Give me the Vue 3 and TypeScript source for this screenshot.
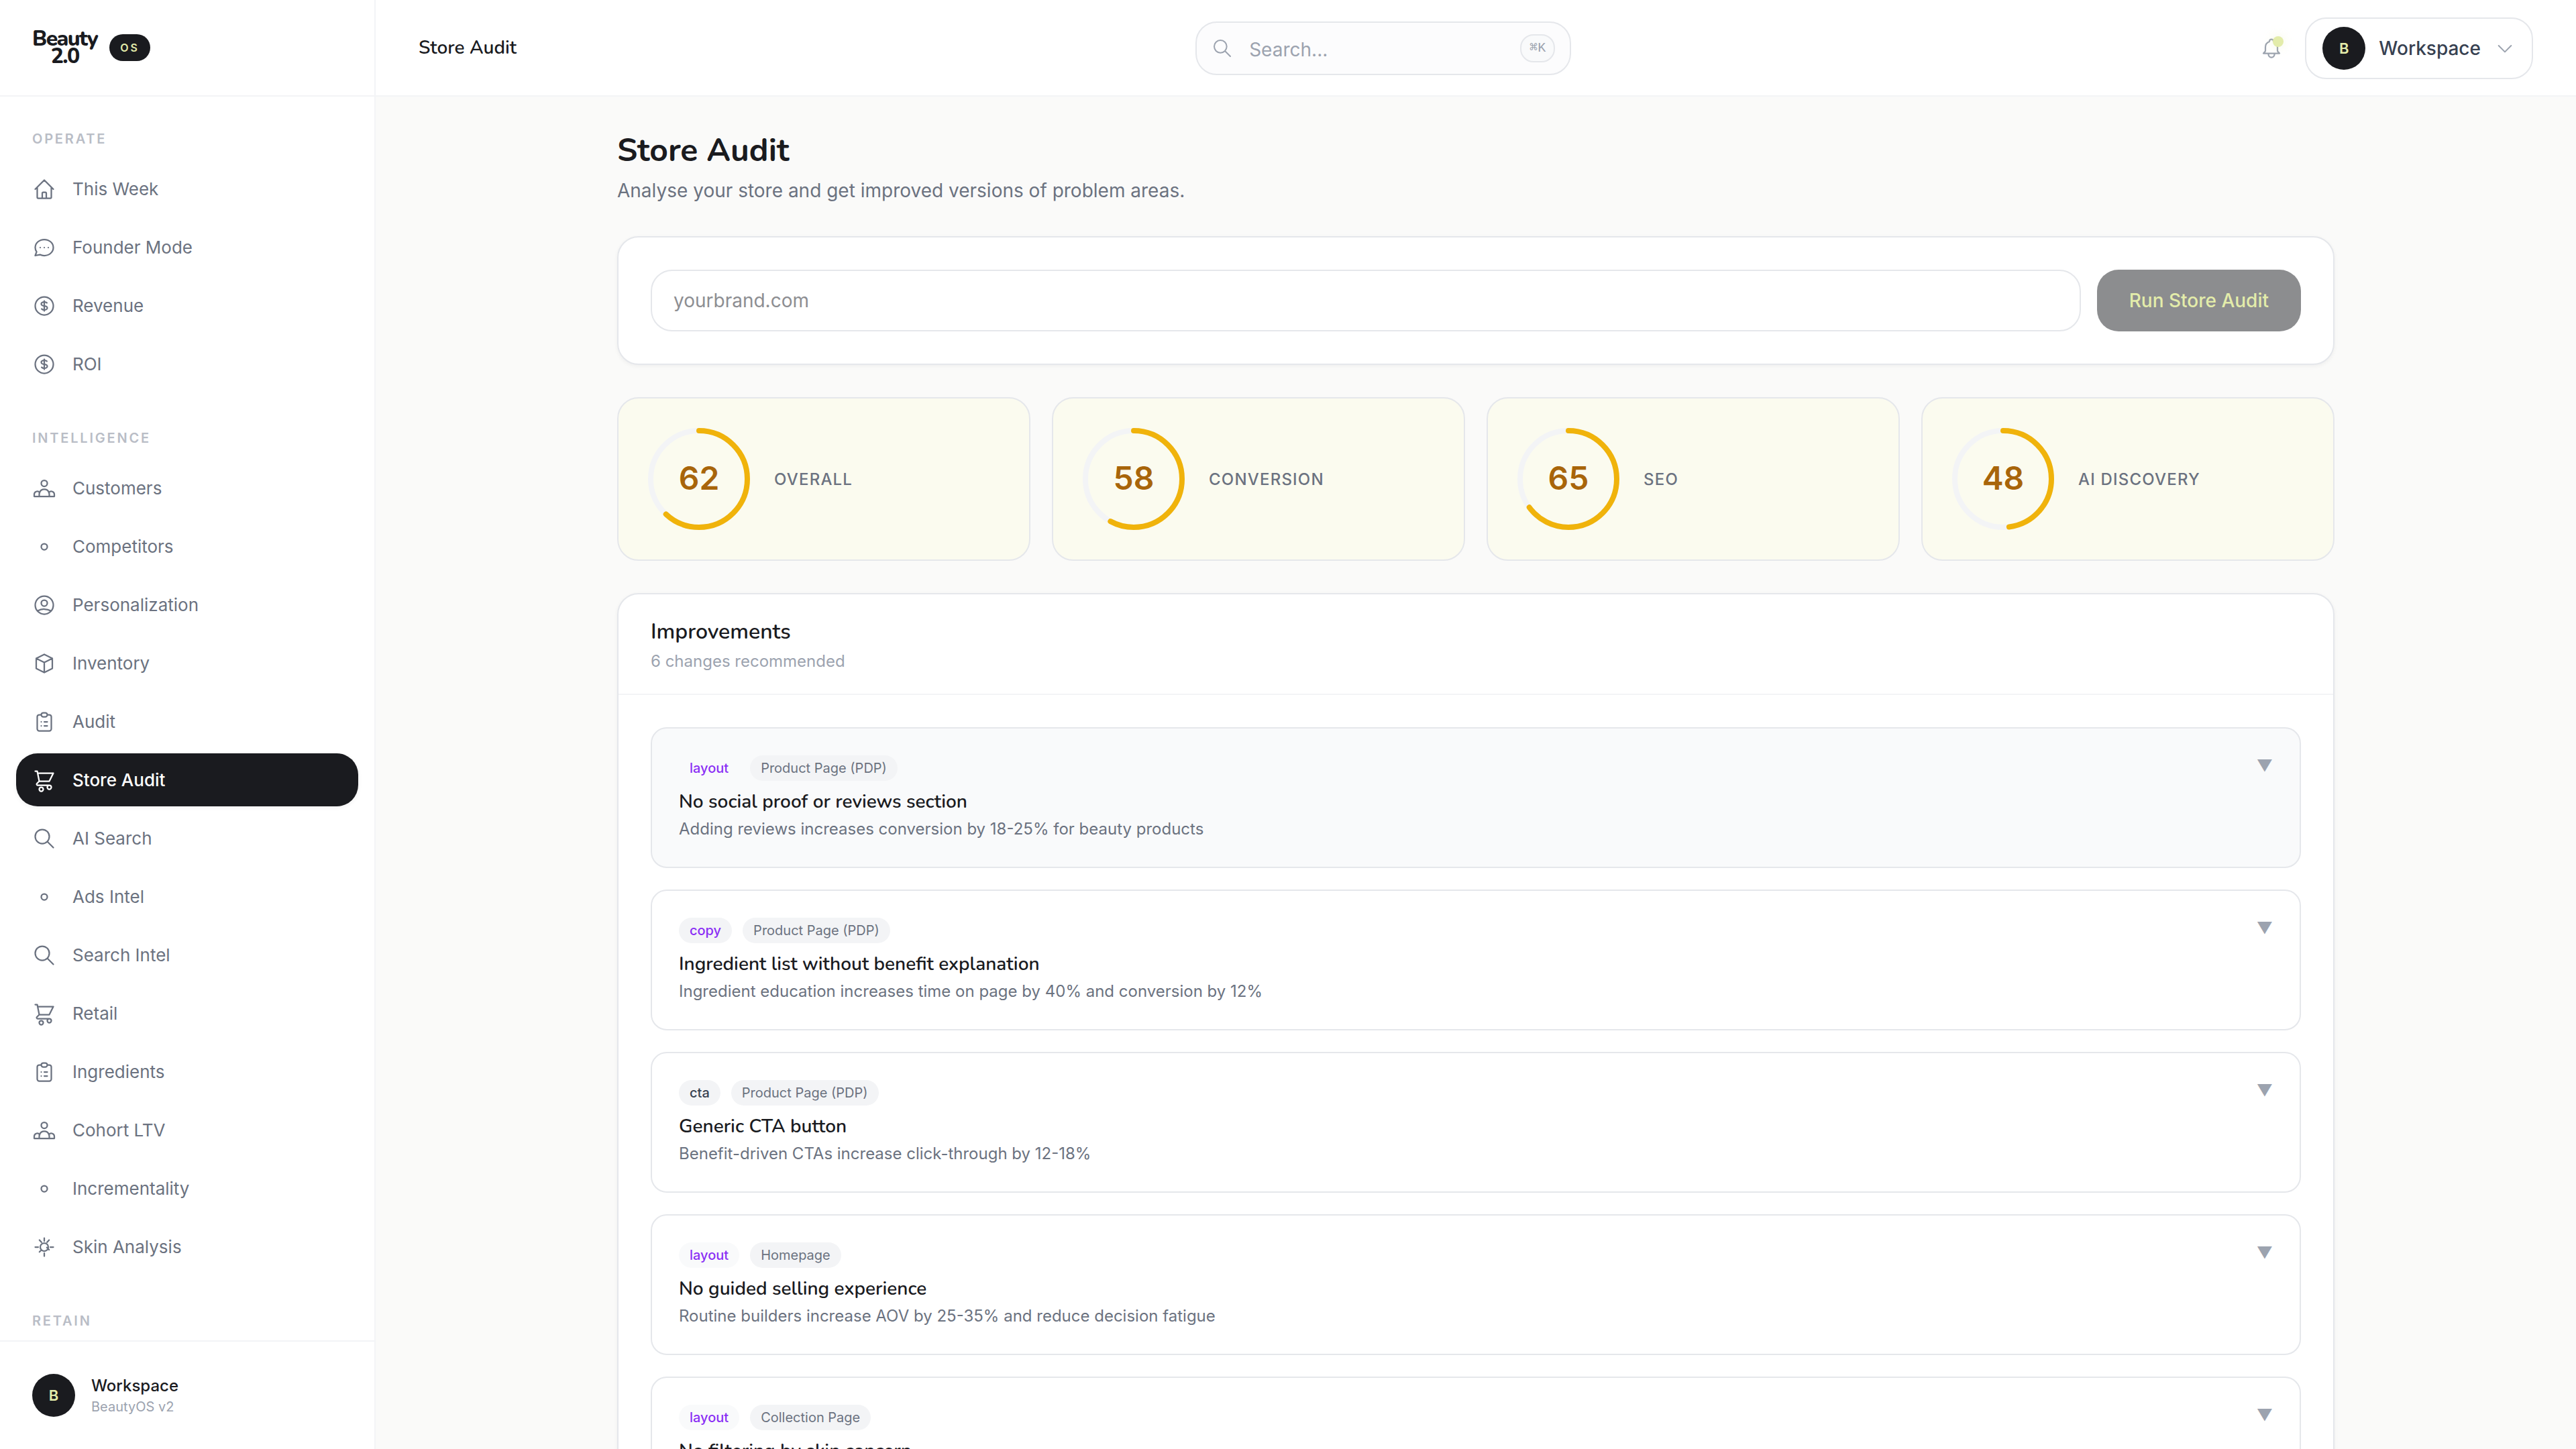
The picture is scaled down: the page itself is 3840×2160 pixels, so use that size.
<script setup lang="ts">
import { ref } from 'vue'

type IconName =
  | 'home' | 'chat' | 'dollar' | 'users' | 'dot' | 'user' | 'box'
  | 'clipboard' | 'cart' | 'search' | 'sun'

interface NavItem { label: string; icon: IconName; active?: boolean }
interface NavSection { title: string; items: NavItem[] }
interface Score { label: string; value: number }
interface Improvement { kind: string; page: string; title: string; impact: string }

const icons: Record<IconName, string> = {
  home: 'M3 12l2-2m0 0l7-7 7 7M5 10v10a1 1 0 001 1h3m10-11l2 2m-2-2v10a1 1 0 01-1 1h-3m-6 0a1 1 0 001-1v-4a1 1 0 011-1h2a1 1 0 011 1v4a1 1 0 001 1m-6 0h6',
  chat: 'M8 12h.01M12 12h.01M16 12h.01M21 12c0 4.418-4.03 8-9 8a9.863 9.863 0 01-4.255-.949L3 20l1.395-3.72C3.512 15.042 3 13.574 3 12c0-4.418 4.03-8 9-8s9 3.582 9 8z',
  dollar: 'M12 8c-1.657 0-3 .895-3 2s1.343 2 3 2 3 .895 3 2-1.343 2-3 2m0-8c1.11 0 2.08.402 2.599 1M12 8V7m0 1v8m0 0v1m0-1c-1.11 0-2.08-.402-2.599-1M21 12a9 9 0 11-18 0 9 9 0 0118 0z',
  users: 'M17 20h5v-2a3 3 0 00-5.356-1.857M17 20H7m10 0v-2c0-.656-.126-1.283-.356-1.857M7 20H2v-2a3 3 0 015.356-1.857M7 20v-2c0-.656.126-1.283.356-1.857m0 0a5.002 5.002 0 019.288 0M15 7a3 3 0 11-6 0 3 3 0 016 0z',
  dot: 'M15 12a3 3 0 11-6 0 3 3 0 016 0z',
  user: 'M5.121 17.804A13.937 13.937 0 0112 16c2.5 0 4.847.655 6.879 1.804M15 10a3 3 0 11-6 0 3 3 0 016 0zm6 2a9 9 0 11-18 0 9 9 0 0118 0z',
  box: 'M20 7l-8-4-8 4m16 0l-8 4m8-4v10l-8 4m0-10L4 7m8 4v10M4 7v10l8 4',
  clipboard: 'M9 5H7a2 2 0 00-2 2v12a2 2 0 002 2h10a2 2 0 002-2V7a2 2 0 00-2-2h-2M9 5a2 2 0 002 2h2a2 2 0 002-2M9 5a2 2 0 012-2h2a2 2 0 012 2m-3 7h3m-3 4h3m-6-4h.01M9 16h.01',
  cart: 'M3 3h2l.4 2M7 13h10l4-8H5.4M7 13L5.4 5M7 13l-2.293 2.293c-.63.63-.184 1.707.707 1.707H17m0 0a2 2 0 100 4 2 2 0 000-4zM11 21a2 2 0 11-4 0 2 2 0 014 0z',
  search: 'M21 21l-6-6m2-5a7 7 0 11-14 0 7 7 0 0114 0z',
  sun: 'M12 3v3m0 12v3M3 12h3m12 0h3M7.2 5l2 2.2M16.8 5l-2 2.2M7.2 16.8l1.8-1.8M14.6 12.4l2.2 2.3M16 12a4 4 0 11-8 0 4 4 0 018 0z',
}

const sections: NavSection[] = [
  {
    title: 'OPERATE',
    items: [
      { label: 'This Week', icon: 'home' },
      { label: 'Founder Mode', icon: 'chat' },
      { label: 'Revenue', icon: 'dollar' },
      { label: 'ROI', icon: 'dollar' },
    ],
  },
  {
    title: 'INTELLIGENCE',
    items: [
      { label: 'Customers', icon: 'users' },
      { label: 'Competitors', icon: 'dot' },
      { label: 'Personalization', icon: 'user' },
      { label: 'Inventory', icon: 'box' },
      { label: 'Audit', icon: 'clipboard' },
      { label: 'Store Audit', icon: 'cart', active: true },
      { label: 'AI Search', icon: 'search' },
      { label: 'Ads Intel', icon: 'dot' },
      { label: 'Search Intel', icon: 'search' },
      { label: 'Retail', icon: 'cart' },
      { label: 'Ingredients', icon: 'clipboard' },
      { label: 'Cohort LTV', icon: 'users' },
      { label: 'Incrementality', icon: 'dot' },
      { label: 'Skin Analysis', icon: 'sun' },
    ],
  },
  { title: 'RETAIN', items: [] },
]

const scores: Score[] = [
  { label: 'OVERALL', value: 62 },
  { label: 'CONVERSION', value: 58 },
  { label: 'SEO', value: 65 },
  { label: 'AI DISCOVERY', value: 48 },
]

const improvements: Improvement[] = [
  { kind: 'layout', page: 'Product Page (PDP)', title: 'No social proof or reviews section', impact: 'Adding reviews increases conversion by 18-25% for beauty products' },
  { kind: 'copy', page: 'Product Page (PDP)', title: 'Ingredient list without benefit explanation', impact: 'Ingredient education increases time on page by 40% and conversion by 12%' },
  { kind: 'cta', page: 'Product Page (PDP)', title: 'Generic CTA button', impact: 'Benefit-driven CTAs increase click-through by 12-18%' },
  { kind: 'layout', page: 'Homepage', title: 'No guided selling experience', impact: 'Routine builders increase AOV by 25-35% and reduce decision fatigue' },
  { kind: 'layout', page: 'Collection Page', title: 'No filtering by skin concern', impact: '' },
]

const storeUrl = ref('')
const query = ref('')
const highlighted = ref(0)
</script>

<template>
  <div class="shell">
    <aside class="sidebar">
      <div class="brand">
        <span class="logo">Beauty<br>2.0</span>
        <span class="os">OS</span>
      </div>
      <nav class="nav" aria-label="Main">
        <section v-for="section in sections" :key="section.title" class="nav-section">
          <h2 class="nav-title">{{ section.title }}</h2>
          <ul class="nav-list">
            <li v-for="item in section.items" :key="item.label">
              <a href="#" class="nav-link" :class="{ active: item.active }" :aria-current="item.active ? 'page' : undefined">
                <svg class="nav-icon" viewBox="0 0 24 24" aria-hidden="true"><path :d="icons[item.icon]" /></svg>
                {{ item.label }}
              </a>
            </li>
          </ul>
        </section>
      </nav>
      <div class="account">
        <span class="avatar">B</span>
        <div>
          <p class="account-name">Workspace</p>
          <p class="account-plan">BeautyOS v2</p>
        </div>
      </div>
    </aside>

    <div class="column">
      <header class="topbar">
        <span class="crumb">Store Audit</span>
        <label class="search">
          <svg class="small-icon" viewBox="0 0 24 24" aria-hidden="true"><path :d="icons.search" /></svg>
          <input v-model="query" type="text" placeholder="Search..." aria-label="Search">
          <kbd>⌘K</kbd>
        </label>
        <div class="actions">
          <button class="bell" type="button" aria-label="Notifications">
            <svg class="nav-icon" viewBox="0 0 24 24" aria-hidden="true">
              <path d="M15 17h5l-1.405-1.405A2.032 2.032 0 0118 14.158V11a6.002 6.002 0 00-4-5.659V5a2 2 0 10-4 0v.341C7.67 6.165 6 8.388 6 11v3.159c0 .538-.214 1.055-.595 1.436L4 17h5m6 0v1a3 3 0 11-6 0v-1m6 0H9" />
            </svg>
            <span class="bell-dot"></span>
          </button>
          <button class="workspace" type="button">
            <span class="avatar">B</span>
            Workspace
            <svg class="small-icon" viewBox="0 0 24 24" aria-hidden="true"><path d="M19 9l-7 7-7-7" /></svg>
          </button>
        </div>
      </header>

      <main class="main">
        <div class="content">
          <div class="heading">
            <h1>Store Audit</h1>
            <p>Analyse your store and get improved versions of problem areas.</p>
          </div>

          <form class="card audit-form" @submit.prevent>
            <input v-model="storeUrl" type="text" placeholder="yourbrand.com" aria-label="Store address">
            <button type="submit" :disabled="!storeUrl">Run Store Audit</button>
          </form>

          <div class="scores">
            <div v-for="score in scores" :key="score.label" class="score">
              <div class="ring">
                <svg viewBox="0 0 160 160" aria-hidden="true">
                  <circle class="track" cx="80" cy="80" r="72" />
                  <circle class="value" cx="80" cy="80" r="72" pathLength="100" :stroke-dasharray="`${score.value} 100`" transform="rotate(-90 80 80)" />
                </svg>
                <span>{{ score.value }}</span>
              </div>
              <span class="score-label">{{ score.label }}</span>
            </div>
          </div>

          <section class="card">
            <div class="card-head">
              <h2>Improvements</h2>
              <p>6 changes recommended</p>
            </div>
            <div class="items">
              <button
                v-for="(item, i) in improvements"
                :key="item.title"
                type="button"
                class="item"
                :class="{ highlighted: i === highlighted }"
                @mouseenter="highlighted = i"
              >
                <span class="item-body">
                  <span class="badges">
                    <span class="badge kind" :class="item.kind">{{ item.kind }}</span>
                    <span class="badge">{{ item.page }}</span>
                  </span>
                  <span class="item-title">{{ item.title }}</span>
                  <span class="item-impact">{{ item.impact }}</span>
                </span>
                <span class="caret" aria-hidden="true">▼</span>
              </button>
            </div>
          </section>
        </div>
      </main>
    </div>
  </div>
</template>

<style>
body {
  background: #fafaf9;
}
</style>

<style scoped>
.shell {
  display: grid;
  grid-template-columns: 560px minmax(0, 1fr);
  height: 100vh;
  overflow: hidden;
  font-family: Inter, "Liberation Sans", sans-serif;
  color: #1a1b1f;
}

.shell *,
.shell {
  box-sizing: border-box;
}

h1,
h2,
p,
ul {
  margin: 0;
  padding: 0;
}

button,
input {
  font-family: inherit;
}

svg {
  display: block;
  flex: none;
  fill: none;
  stroke: currentColor;
  stroke-width: 1.5;
  stroke-linecap: round;
  stroke-linejoin: round;
}

.nav-icon {
  width: 36px;
  height: 36px;
}

.small-icon {
  width: 32px;
  height: 32px;
  color: #9ca3af;
}

/* Sidebar */
.sidebar {
  display: flex;
  flex-direction: column;
  min-height: 0;
  background: #fff;
  border-right: 2px solid #f3f4f6;
}

.brand {
  display: flex;
  align-items: center;
  gap: 18px;
  height: 144px;
  flex: none;
  padding: 0 48px;
  border-bottom: 2px solid #f3f4f6;
}

.logo {
  font-family: Nunito, Lato, sans-serif;
  font-size: 32px;
  font-weight: 800;
  line-height: 26px;
  letter-spacing: -0.05em;
  text-align: center;
}

.os {
  padding: 8px 16px;
  border-radius: 20px;
  background: #1a1b1f;
  color: #e3ecaa;
  font-size: 16px;
  font-weight: 600;
  line-height: 24px;
  letter-spacing: 3px;
}

.nav {
  flex: 1;
  min-height: 0;
  padding: 48px 24px 0;
  overflow: hidden;
}

.nav-section {
  margin-bottom: 56px;
}

.nav-title {
  margin-bottom: 20px;
  padding: 0 24px;
  color: #b9bdc6;
  font-size: 20px;
  font-weight: 600;
  line-height: 30px;
  letter-spacing: 0.14em;
}

.nav-list {
  display: flex;
  flex-direction: column;
  gap: 8px;
  list-style: none;
}

.nav-link {
  display: flex;
  align-items: center;
  gap: 24px;
  padding: 20px 24px;
  border-radius: 32px;
  color: #6b7280;
  font-size: 26px;
  line-height: 39px;
  text-decoration: none;
}

.nav-link.active {
  background: #1a1b1f;
  box-shadow: 0 2px 6px rgba(26, 27, 31, 0.06);
  color: #fff;
  font-weight: 500;
}

.account {
  display: flex;
  align-items: center;
  gap: 24px;
  flex: none;
  padding: 48px;
  border-top: 2px solid #f3f4f6;
}

.account > div {
  height: 64px;
}

.account-name {
  font-size: 24px;
  font-weight: 500;
  line-height: 36px;
}

.account-plan {
  color: #9ca3af;
  font-size: 20px;
  line-height: 26px;
}

.avatar {
  display: grid;
  place-items: center;
  flex: none;
  width: 64px;
  height: 64px;
  border-radius: 50%;
  background: #1a1b1f;
  color: #e3ecaa;
  font-size: 22px;
  font-weight: 600;
}

/* Top bar */
.column {
  display: flex;
  flex-direction: column;
  min-height: 0;
}

.topbar {
  display: flex;
  align-items: center;
  justify-content: space-between;
  height: 144px;
  flex: none;
  padding: 0 64px;
  background: #fff;
  border-bottom: 2px solid #f3f4f6;
}

.crumb {
  font-family: Nunito, Lato, sans-serif;
  font-size: 28px;
  font-weight: 600;
}

.search,
.actions {
  margin-top: 2px;
}

.search {
  display: flex;
  align-items: center;
  gap: 24px;
  width: 560px;
  height: 80px;
  padding: 0 22px;
  border: 2px solid #e5e7eb;
  border-radius: 32px;
  background: #fcfcfd;
}

.search input {
  flex: 1;
  min-width: 0;
  padding: 4px 0 0;
  border: 0;
  outline: 0;
  background: none;
  font-size: 28px;
}

.search input::placeholder {
  color: #9ca3af;
}

.search kbd {
  padding: 4px 12px;
  border: 2px solid #e5e7eb;
  border-radius: 20px;
  background: #f9fafb;
  color: #9ca3af;
  font-family: "Liberation Mono", "DejaVu Sans Mono", monospace;
  font-size: 20px;
  line-height: 30px;
}

.actions {
  display: flex;
  align-items: center;
  gap: 18px;
}

.bell {
  position: relative;
  padding: 14px;
  border: 0;
  background: none;
  color: #9ca3af;
}

.bell-dot {
  position: absolute;
  top: 14px;
  right: 14px;
  width: 16px;
  height: 16px;
  border-radius: 50%;
  background: #e3ecaa;
  box-shadow: 0 0 16px rgba(227, 236, 170, 0.4);
}

.workspace {
  display: flex;
  align-items: center;
  gap: 20px;
  padding: 12px 24px;
  border: 2px solid #e5e7eb;
  border-radius: 32px;
  background: #fff;
  color: #374151;
  font-size: 28px;
  font-weight: 500;
}

/* Page */
.main {
  flex: 1;
  min-height: 0;
  padding: 48px 64px 0;
  overflow: hidden;
  background: #fafaf9;
}

.content {
  display: flex;
  flex-direction: column;
  gap: 48px;
  max-width: 2560px;
  margin: 0 auto;
}

.heading h1 {
  font-family: Nunito, Lato, sans-serif;
  font-size: 48px;
  font-weight: 700;
  line-height: 64px;
}

.heading p {
  margin-top: 8px;
  color: #6b7280;
  font-size: 28px;
  line-height: 40px;
}

.card {
  border: 2px solid #e5e7eb;
  border-radius: 32px;
  background: #fff;
  box-shadow: 0 2px 6px rgba(26, 27, 31, 0.05);
}

.audit-form {
  display: flex;
  gap: 24px;
  padding: 48px;
}

.audit-form input {
  flex: 1;
  min-width: 0;
  height: 92px;
  padding: 0 32px;
  border: 2px solid #e5e7eb;
  border-radius: 32px;
  outline: 0;
  background: #fff;
  color: #1a1b1f;
  font-size: 28px;
}

.audit-form input::placeholder {
  color: #8d8e92;
}

.audit-form button {
  padding: 0 48px;
  border: 0;
  border-radius: 32px;
  background: #1a1b1f;
  color: #e3ecaa;
  font-size: 28px;
  font-weight: 500;
}

.audit-form button:disabled {
  background: #8c8d8f;
}

.scores {
  display: grid;
  grid-template-columns: repeat(4, minmax(0, 1fr));
  gap: 32px;
}

.score {
  display: flex;
  align-items: center;
  gap: 32px;
  padding: 40px;
  border: 2px solid #e5e7eb;
  border-radius: 32px;
  background: #fbfbef;
}

.ring {
  display: grid;
  place-items: center;
  width: 160px;
  height: 160px;
  color: #a8650a;
  font-size: 48px;
  font-weight: 600;
}

.ring > * {
  grid-area: 1 / 1;
}

.ring span {
  padding-bottom: 4px;
}

.ring svg {
  width: 160px;
  height: 160px;
  stroke-width: 8;
}

.track {
  stroke: #f3f4f6;
}

.value {
  stroke: #f0b30b;
}

.score-label {
  color: #6b7280;
  font-size: 24px;
  font-weight: 500;
  letter-spacing: 0.05em;
}

.card-head {
  padding: 32px 48px;
  border-bottom: 2px solid #f3f4f6;
}

.card-head h2 {
  font-family: Nunito, Lato, sans-serif;
  font-size: 32px;
  font-weight: 600;
  line-height: 48px;
}

.card-head p {
  margin-top: 4px;
  color: #9ca3af;
  font-size: 24px;
  line-height: 32px;
}

.items {
  display: flex;
  flex-direction: column;
  gap: 32px;
  padding: 48px;
}

.item {
  display: flex;
  align-items: flex-start;
  justify-content: space-between;
  padding: 40px;
  border: 2px solid #e5e7eb;
  border-radius: 24px;
  background: #fff;
  color: #1a1b1f;
  text-align: left;
}

.item.highlighted {
  background: #f9fafb;
}

.item-body {
  display: flex;
  flex-direction: column;
}

.badges {
  display: flex;
  gap: 16px;
}

.badge {
  padding: 4px 16px;
  border-radius: 20px;
  background: #f3f4f6;
  color: #6b7280;
  font-size: 20px;
  line-height: 30px;
}

.badge.kind {
  color: #374151;
  font-weight: 500;
}

.badge.copy {
  color: #8b2ff5;
}

.badge.layout {
  background: #f9fafb;
  color: #8b2ff5;
}

.item-title {
  margin-top: 12px;
  font-family: Nunito, Lato, sans-serif;
  font-size: 28px;
  font-weight: 600;
  line-height: 38px;
}

.item-impact {
  min-height: 32px;
  margin-top: 6px;
  color: #6b7280;
  font-size: 24px;
  line-height: 32px;
}

.caret {
  color: #9ca3af;
  font-size: 24px;
  line-height: 32px;
}
</style>
